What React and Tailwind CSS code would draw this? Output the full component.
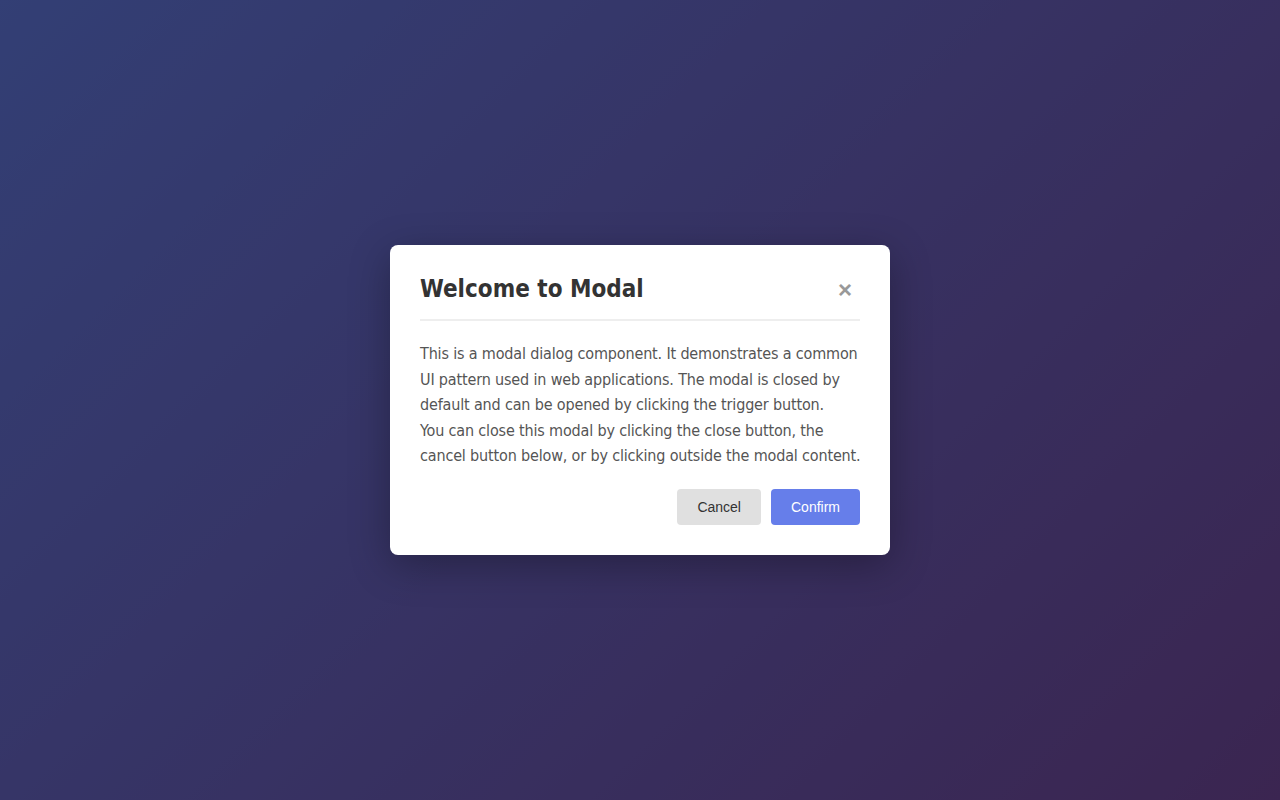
import React from 'react';

const App = () => {
    return (
        <div className='min-h-screen bg-[linear-gradient(135deg,#667eea_0%,#764ba2_100%)]'>
            <div className='h-screen w-full bg-black/50 flex items-center justify-center'>
                <div className='w-[500px] bg-white rounded-lg p-[30px] shadow-[0_10px_40px_rgba(0,0,0,0.3)] font-["DejaVu_Sans_Condensed","DejaVu_Sans",sans-serif]'>
                    <div className='flex items-center justify-between pb-[15px] border-b-2 border-[#eeeeee]'>
                        <h2 className='text-[24px] leading-[29px] font-bold text-[#333333]'>Welcome to Modal</h2>
                        <button className='text-[24px] leading-none text-[#999999] px-2 font-["Liberation_Sans",sans-serif] font-bold'>×</button>
                    </div>
                    <p className='mt-5 text-[16px] leading-[1.6] text-[#555555] whitespace-nowrap tracking-[-0.16px]'>
                        This is a modal dialog component. It demonstrates a common<br />
                        UI pattern used in web applications. The modal is closed by<br />
                        default and can be opened by clicking the trigger button.<br />
                        You can close this modal by clicking the close button, the<br />
                        cancel button below, or by clicking outside the modal content.
                    </p>
                    <div className='mt-5 flex justify-end gap-[10px] font-["Liberation_Sans",sans-serif] text-[14px]'>
                        <button className='px-5 py-[10px] rounded bg-[#e0e0e0] text-[#333333] leading-[16px]'>Cancel</button>
                        <button className='px-5 py-[10px] rounded bg-[#667eea] text-white leading-[16px]'>Confirm</button>
                    </div>
                </div>
            </div>
        </div>
    );
}

export default App;
